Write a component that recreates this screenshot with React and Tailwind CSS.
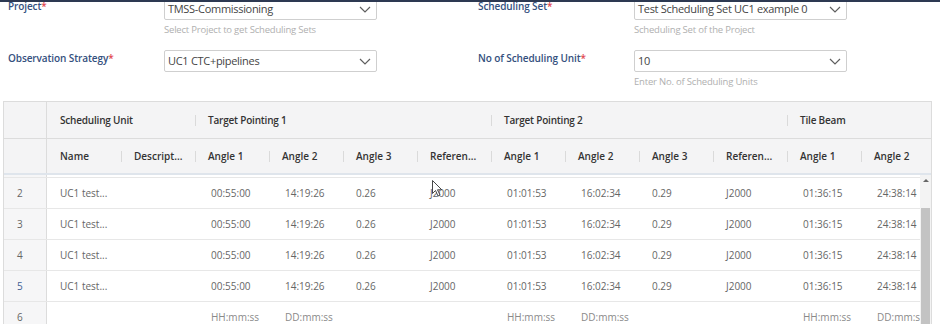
import React from "react";

const groups = [
  { label: "Scheduling Unit", span: "col-span-2" },
  { label: "Target Pointing 1", span: "col-span-4" },
  { label: "Target Pointing 2", span: "col-span-4" },
  { label: "Tile Beam", span: "col-span-2" },
];

const columns = ["Name", "Descript...", "Angle 1", "Angle 2", "Angle 3", "Referen...", "Angle 1", "Angle 2", "Angle 3", "Referen...", "Angle 1", "Angle 2"];

// time columns sit a little further in (editor cells)
const timeCols = [2, 3, 6, 7, 10, 11];

const filled = ["UC1 test...", "", "00:55:00", "14:19:26", "0.26", "J2000", "01:01:53", "16:02:34", "0.29", "J2000", "01:36:15", "24:38:14"];
const empty = ["", "", "HH:mm:ss", "DD:mm:ss", "", "", "HH:mm:ss", "DD:mm:ss", "", "", "HH:mm:ss", "DD:mm:ss"];

const rows = [
  { no: 2, cells: filled },
  { no: 3, cells: filled },
  { no: 4, cells: filled },
  { no: 5, cells: filled, blue: true },
  { no: 6, cells: empty },
];

const Chevron = () => (
  <svg width="12" height="7" viewBox="0 0 12 7" fill="none">
    <path d="M1 1L6 6L11 1" stroke="#5f5f5f" strokeWidth="1.2" />
  </svg>
);

const Field = ({ label, value, help }) => {
  return (
    <div className="flex w-[470px] shrink-0">
      <div className="w-[156px] shrink-0 pt-[2px] leading-[12px] text-[10px] font-semibold tracking-[-0.1px] text-[#34507e]">
        {label}<span className="text-[#e2484f]">*</span>
      </div>
      <div className="w-[213px] shrink-0">
        <div className="h-[22px] flex items-center justify-between border border-[#cfcfcf] rounded-[2px] bg-white pl-[3px] pr-[5px]">
          <span className="text-[11px] tracking-[-0.3px] text-[#444]">{value}</span>
          <Chevron />
        </div>
        <div className="mt-[3px] h-[14px] leading-[14px] text-[9.5px] tracking-[-0.2px] text-[#b0b0b0]">{help}</div>
      </div>
    </div>
  );
};

const App = () => {
  return (
    <div className="relative h-[324px] w-[940px] overflow-hidden bg-white" style={{ fontFamily: '"Open Sans", "Noto Sans", sans-serif' }}>
      <div className="-mt-[2px] px-[8px]">
        <div className="flex mb-[13px]">
          <Field label="Project" value="TMSS-Commissioning" help="Select Project to get Scheduling Sets" />
          <Field label="Scheduling Set" value="Test Scheduling Set UC1 example 0" help="Scheduling Set of the Project" />
        </div>
        <div className="flex">
          <Field label="Observation Strategy" value="UC1 CTC+pipelines" help="" />
          <Field label="No of Scheduling Unit" value="10" help="Enter No. of Scheduling Units" />
        </div>
      </div>

      <div className="mt-[12px] ml-[3px] w-[929px] border border-[#dcdcdc] overflow-hidden">
        {/* header */}
        <div className="bg-[#f4f4f5] text-[10px] font-semibold text-[#333]">
          <div className="grid grid-cols-[43px_repeat(12,74px)] h-[37px] border-b border-[#dcdcdc]">
            <div className="border-r border-[#dcdcdc]" />
            {groups.map((g, i) => (
              <div key={i} className={`${g.span} relative flex items-center pl-[13px] tracking-[-0.2px]`}>
                {i > 0 && <div className="absolute left-0 top-[13px] h-[11px] w-px bg-[#dadada]" />}
                {g.label}
              </div>
            ))}
          </div>
          <div className="grid grid-cols-[43px_repeat(12,74px)] h-[36px] border-b-2 border-[#dfe5ec]">
            <div className="border-r border-[#dcdcdc]" />
            {columns.map((c, i) => (
              <div key={i} className="relative flex items-center pl-[13px] overflow-hidden whitespace-nowrap">
                {i > 0 && <div className="absolute left-0 top-[12px] h-[11px] w-px bg-[#dadada]" />}
                {c}
              </div>
            ))}
          </div>
        </div>

        {/* body */}
        <div className="flex h-[160px]">
          <div className="flex-1 overflow-hidden text-[10px] text-[#666]">
            {/* bottom of the row scrolled out of view */}
            <div className="grid grid-cols-[43px_repeat(12,74px)] h-[3px] border-b border-[#e7e7e7]">
              <div className="bg-[#f6f6f7] border-r border-[#dcdcdc]" />
            </div>
            {rows.map((r) => (
              <div key={r.no} className="grid grid-cols-[43px_repeat(12,74px)] h-[31px] border-b border-[#e7e7e7]">
                <div className={`flex items-center pl-[13px] bg-[#f6f6f7] border-r border-[#dcdcdc] ${r.blue ? "text-[#3f5f93]" : "text-[#666]"}`}>
                  {r.no}
                </div>
                {r.cells.map((c, i) => (
                  <div
                    key={i}
                    className={`flex items-center whitespace-nowrap overflow-hidden ${timeCols.includes(i) ? "pl-[16px]" : "pl-[13px]"} ${r.no >= 6 ? "text-[#8a8a8a]" : ""}`}
                  >
                    {c}
                  </div>
                ))}
              </div>
            ))}
          </div>
          <div className="w-[11px] bg-[#f3f3f3] flex flex-col items-center">
            <div className="h-[10px] flex items-center justify-center">
              <div className="w-0 h-0 border-l-[3px] border-r-[3px] border-b-[3px] border-l-transparent border-r-transparent border-b-[#666]" />
            </div>
            <div className="mt-[23px] w-[9px] flex-1 bg-[#c3c3c3]" />
          </div>
        </div>
      </div>

      {/* window edge above the form */}
      <div className="absolute left-0 top-0 h-[2px] w-full bg-[#2d3952]" />

      {/* mouse pointer */}
      <svg className="absolute left-[432px] top-[180px]" width="11" height="17" viewBox="0 0 11 17">
        <path d="M0.5 0.5L0.5 13.5L3.5 10.5L6 16L8 15L5.5 9.8L9.8 9.8Z" fill="#fff" stroke="#333" strokeWidth="0.9" />
      </svg>
    </div>
  );
};

export default App;
